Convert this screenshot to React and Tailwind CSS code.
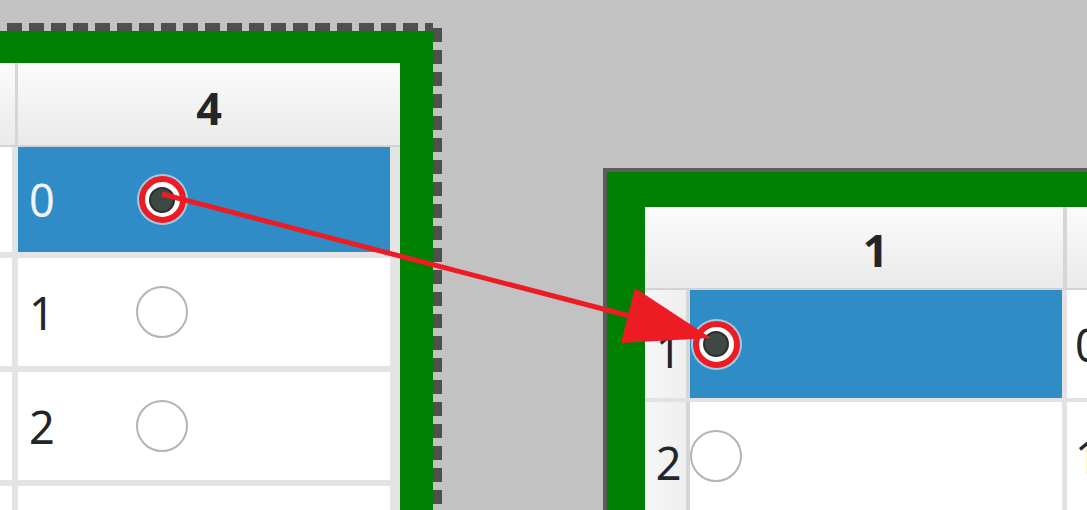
const ink = "text-[#232629]"

function Radio({ checked }) {
  if (checked) {
    return (
      <div className="w-[52px] h-[52px] shrink-0 flex items-center justify-center">
        <div className="w-[47px] h-[47px] rounded-full border-[6px] border-[#ed1c24] bg-white flex items-center justify-center shadow-[0_0_0_2px_rgba(255,255,255,0.55)]">
          <div className="w-[26px] h-[26px] rounded-full bg-[#3f4944] border-2 border-[#2a2f2c]" />
        </div>
      </div>
    )
  }
  return <div className="w-[52px] h-[52px] shrink-0 rounded-full border-2 border-[#b4b4b4] bg-white" />
}

// left window: one visible column "4"
function LeftRow({ label, selected, h }) {
  return (
    <div className={`flex shrink-0 ${h}`}>
      <div className="w-[12px] bg-white" />
      <div className="w-[6px] bg-[#e3e3e3]" />
      <div className={`w-[372px] flex items-center pl-[11px] ${selected ? "bg-[#308cc6]" : "bg-white"}`}>
        <span className={`w-[107px] leading-none ${selected ? "text-[#eef4fa]" : ink}`}>{label}</span>
        <Radio checked={selected} />
      </div>
      <div className="w-[10px] bg-[#e4e4e4]" />
    </div>
  )
}

function LeftPanel() {
  return (
    <div className="mt-[23px] shrink-0 flex">
      <div className="flex flex-col">
        <div className="h-[8px] w-[433px] bg-[repeating-linear-gradient(90deg,transparent_0_7px,#4f4f4f_7px_22px)]" />
        <div className="w-[433px] h-[520px] bg-[#008000] pt-[32px] pr-[33px]">
          <div className="w-[400px] h-full overflow-hidden bg-white flex flex-col text-[45px]">
            <div className="flex shrink-0 h-[82px] bg-linear-to-b from-[#fbfbfb] to-[#eaeaea]">
              <div className="w-[15px]" />
              <div className="w-[3px] bg-[#d6d6d6]" />
              <div className={`flex-1 flex items-center justify-center pt-[6px] font-bold leading-none ${ink}`}>4</div>
            </div>
            <div className="h-[2px] shrink-0 bg-[#d3d3d3]" />
            <LeftRow label="0" selected h="h-[105px]" />
            <div className="h-[6px] shrink-0 bg-[#e3e3e3]" />
            <LeftRow label="1" h="h-[108px]" />
            <div className="h-[6px] shrink-0 bg-[#e3e3e3]" />
            <LeftRow label="2" h="h-[108px]" />
            <div className="h-[6px] shrink-0 bg-[#e3e3e3]" />
            <LeftRow label="" h="h-[108px]" />
          </div>
        </div>
      </div>
      <div className="w-[9px] h-[528px] bg-[repeating-linear-gradient(180deg,transparent_0_5px,#4f4f4f_5px_19px,transparent_19px_22px)]" />
    </div>
  )
}

// right window: row headers + column "1"
function RightRow({ num, value, selected, h }) {
  return (
    <div className={`flex shrink-0 ${h}`}>
      <div className={`w-[41px] bg-linear-to-r from-[#f6f6f6] to-[#efefef] flex items-center justify-center pl-[6px] pt-[12px] leading-none ${ink}`}>{num}</div>
      <div className="w-[4px] bg-[#d6d6d6]" />
      <div className={`w-[372px] flex items-center ${selected ? "bg-[#308cc6]" : "bg-white"}`}>
        <Radio checked={selected} />
      </div>
      <div className="w-[5px] bg-[#e2e2e2]" />
      <div className={`flex-1 bg-white flex items-center pl-[8px] leading-none ${ink}`}>{value}</div>
    </div>
  )
}

function RightPanel() {
  return (
    <div className="ml-[161px] mt-[168px] shrink-0 w-[520px] h-[360px] border-l-4 border-t-4 border-[#5c5c5c] bg-[#008000] pl-[38px] pt-[35px]">
      <div className="h-full overflow-hidden bg-white flex flex-col text-[45px]">
        <div className="flex shrink-0 h-[81px] bg-linear-to-b from-[#fbfbfb] to-[#eaeaea]">
          <div className="w-[43px]" />
          <div className={`w-[375px] flex items-center justify-center pt-[3px] font-bold leading-none ${ink}`}>1</div>
          <div className="w-[4px] bg-[#d6d6d6]" />
          <div className="flex-1" />
        </div>
        <div className="h-[2px] shrink-0 bg-[#d3d3d3]" />
        <RightRow num="1" value="0" selected h="h-[108px]" />
        <div className="h-[4px] shrink-0 bg-[#e2e2e2]" />
        <RightRow num="2" value="1" h="h-[108px]" />
      </div>
    </div>
  )
}

export default function App() {
  return (
    <div className="relative w-[1087px] h-[510px] overflow-hidden bg-[#c2c2c2] flex items-start font-['Noto_Sans',sans-serif]">
      <LeftPanel />
      <RightPanel />
      {/* annotation arrow */}
      <svg className="absolute inset-0 pointer-events-none" width="1087" height="510">
        <line x1="162" y1="194" x2="630" y2="316" stroke="#ed1c24" strokeWidth="5" />
        <polygon points="635,288 621,343 711,338" fill="#ed1c24" />
      </svg>
    </div>
  )
}
